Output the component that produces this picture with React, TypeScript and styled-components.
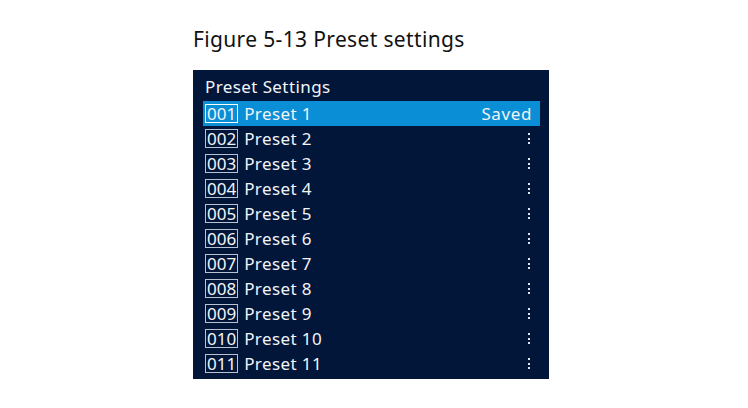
import React from 'react'
import styled, { createGlobalStyle } from 'styled-components'

const GlobalStyle = createGlobalStyle`
  html, body {
    margin: 0;
    padding: 0;
    background: #ffffff;
  }
  body {
    font-family: "Noto Sans", "Liberation Sans", sans-serif;
  }
`

const Page = styled.div`
  width: 748px;
  height: 408px;
  padding: 25px 0 0 193px;
  box-sizing: border-box;
`

const Caption = styled.h2`
  margin: 0 0 17px 0;
  font-size: 21px;
  line-height: 28px;
  font-weight: 400;
  letter-spacing: 0.35px;
  color: #111;
`

const Panel = styled.div`
  width: 356px;
  height: 309px;
  background: #02163a;
  padding: 6px 9px 0 10px;
  box-sizing: border-box;
  color: #f2f4f8;
`

const Title = styled.div`
  font-size: 17px;
  line-height: 22px;
  letter-spacing: 0.4px;
  padding-left: 2px;
  margin-bottom: 3px;
`

const List = styled.div`
  display: flex;
  flex-direction: column;
`

const Row = styled.div<{ $active?: boolean }>`
  display: flex;
  align-items: center;
  height: 25px;
  padding: 0 8px 0 2px;
  background: ${(p) => (p.$active ? '#0a8ed5' : 'transparent')};
  font-size: 17px;
  letter-spacing: 0.4px;
`

const Num = styled.span<{ $active?: boolean }>`
  display: inline-block;
  border: 1px solid ${(p) => (p.$active ? '#ffffff' : '#b9c2d2')};
  line-height: 17px;
  padding: 0 1px;
  margin-right: 6px;
  letter-spacing: 0;
`

const Name = styled.span`
  flex: 1;
`

const Status = styled.span`
  letter-spacing: 0.6px;
`

const Kebab = styled.span`
  display: flex;
  flex-direction: column;
  gap: 2.5px;
  margin-right: 2px;
  & > i {
    width: 2px;
    height: 2px;
    background: #dfe5f0;
    display: block;
  }
`

const presets = Array.from({ length: 11 }, (_, i) => i + 1)

const App = () => {
  return (
    <Page>
      <GlobalStyle />
      <Caption>Figure 5-13 Preset settings</Caption>
      <Panel>
        <Title>Preset Settings</Title>
        <List>
          {presets.map((n) => {
            const active = n === 1
            return (
              <Row key={n} $active={active}>
                <Num $active={active}>{String(n).padStart(3, '0')}</Num>
                <Name>Preset {n}</Name>
                {active ? (
                  <Status>Saved</Status>
                ) : (
                  <Kebab>
                    <i />
                    <i />
                    <i />
                  </Kebab>
                )}
              </Row>
            )
          })}
        </List>
      </Panel>
    </Page>
  )
}

export default App
